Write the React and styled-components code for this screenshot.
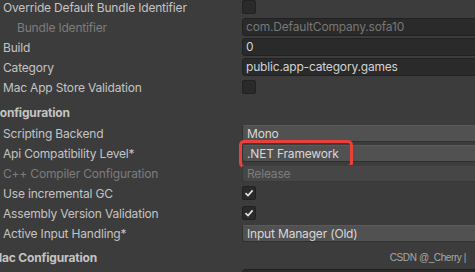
import React from "react";
import styled, { createGlobalStyle } from "styled-components";

const GlobalStyle = createGlobalStyle`
    html, body {
        margin: 0;
        padding: 0;
        background: #3c3c3c;
        overflow: hidden;
    }
    body {
        font-family: 'Inter', 'Noto Sans', sans-serif;
        font-size: 12px;
        letter-spacing: -0.18px;
        color: #c4c4c4;
    }
`

const Page = styled.div`
    position: relative;
    width: 475px;
    height: 272px;
    overflow: hidden;
`

const Inspector = styled.div`
    display: flex;
    flex-direction: column;
    margin-top: -3px;
`

const Row = styled.div`
    display: grid;
    grid-template-columns: 242px 1fr;
    align-items: center;
    height: 20px;
    position: relative;
`

const Label = styled.div`
    padding-left: ${p => p.indent ? 17 : 3}px;
    color: ${p => p.disabled ? "#7d7d7d" : "#c4c4c4"};
    white-space: nowrap;
    overflow: hidden;
`

const Header = styled.div`
    height: 20px;
    line-height: 20px;
    padding-top: ${p => p.top}px;
    margin-left: -9px;
    font-weight: 700;
    color: #c4c4c4;
    white-space: nowrap;
`

const Cell = styled.div`
    position: relative;
    height: 18px;
    display: flex;
    align-items: center;
`

const TextField = styled.div`
    box-sizing: border-box;
    flex-shrink: 0;
    height: 18px;
    width: calc(100% + 12px);
    padding-left: 3px;
    line-height: 16px;
    background: #2a2a2a;
    border: 1px solid #212121;
    border-radius: 3px;
    color: ${p => p.disabled ? "#777" : "#d2d2d2"};
    white-space: nowrap;
`

const Popup = styled.div`
    box-sizing: border-box;
    flex-shrink: 0;
    height: 17px;
    width: calc(100% + 12px);
    padding-left: 4px;
    line-height: 15px;
    background: ${p => p.disabled ? "#464646" : "#515151"};
    border: 1px solid ${p => p.disabled ? "#393939" : "#303030"};
    border-top-color: ${p => p.disabled ? "#3e3e3e" : "#5a5a5a"};
    border-radius: 3px;
    color: ${p => p.disabled ? "#7d7d7d" : "#d8d8d8"};
    white-space: nowrap;
`

const Box = styled.div`
    box-sizing: border-box;
    width: 14px;
    height: 14px;
    background: #2a2a2a;
    border: 1px solid #212121;
    border-radius: 2px;
    display: flex;
    align-items: center;
    justify-content: center;
`

const Highlight = styled.div`
    position: absolute;
    left: -3px;
    top: -4px;
    width: 114px;
    height: 28px;
    box-sizing: border-box;
    border: 3px solid #e8403a;
    border-radius: 5px;
`

const Watermark = styled.div`
    position: absolute;
    right: 9px;
    top: 252px;
    font-family: 'Liberation Sans', Arial, sans-serif;
    font-size: 10px;
    letter-spacing: -0.4px;
    color: #a8a8a8;
`

function Checkbox({ checked }) {
    return (
        <Box>
            {checked ? (
                <svg width="10" height="10" viewBox="0 0 10 10">
                    <polyline points="1.5,5.2 4,7.6 8.6,2.4" fill="none" stroke="#e6e6e6" strokeWidth="1.6" />
                </svg>
            ) : null}
        </Box>
    )
}

const Field = ({ label, indent, disabled, children }) => (
    <Row>
        <Label indent={indent} disabled={disabled}>{label}</Label>
        <Cell>{children}</Cell>
    </Row>
)

export default function App() {
    return (
        <Page>
            <GlobalStyle />
            <Inspector>
                <Field label="Override Default Bundle Identifier"><Checkbox /></Field>
                <Field label="Bundle Identifier" indent disabled>
                    <TextField disabled>com.DefaultCompany.sofa10</TextField>
                </Field>
                <Field label="Build"><TextField>0</TextField></Field>
                <Field label="Category"><TextField>public.app-category.games</TextField></Field>
                <Field label="Mac App Store Validation"><Checkbox /></Field>

                <Header top={6}>Configuration</Header>
                <Field label="Scripting Backend"><Popup>Mono</Popup></Field>
                <Field label="Api Compatibility Level*">
                    <Popup>.NET Framework</Popup>
                    <Highlight />
                </Field>
                <Field label="C++ Compiler Configuration" disabled>
                    <Popup disabled>Release</Popup>
                </Field>
                <Field label="Use incremental GC"><Checkbox checked /></Field>
                <Field label="Assembly Version Validation"><Checkbox checked /></Field>
                <Field label="Active Input Handling*"><Popup>Input Manager (Old)</Popup></Field>

                <Header top={5}>Mac Configuration</Header>
                <Field label=""><TextField /></Field>
            </Inspector>
            <Watermark>CSDN @_Cherry |</Watermark>
        </Page>
    )
}
